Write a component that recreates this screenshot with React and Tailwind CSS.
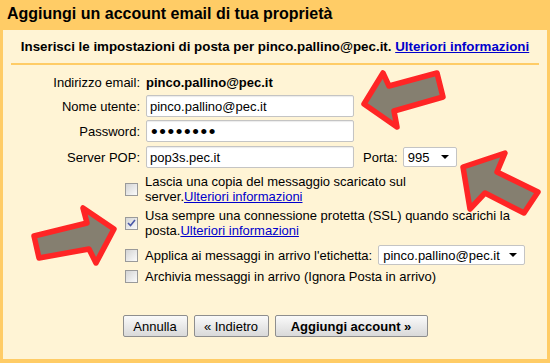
import React from 'react'

function Checkbox({ checked }) {
  return (
    <div className="w-[13px] h-[13px] border border-[#9a9a9a] bg-gradient-to-br from-[#d4d4d4] to-[#fbfbfb] flex items-center justify-center shrink-0">
      {checked && (
        <svg width="9" height="8" viewBox="0 0 9 8">
          <path d="M1 4 L3.5 6.5 L8 1" fill="none" stroke="#4a58a8" strokeWidth="1.6" />
        </svg>
      )}
    </div>
  )
}

function Field({ children, width = 'w-[208px]' }) {
  return (
    <div className={`${width} h-[22px] bg-white border border-[#c4c4c4] rounded-[2px] shadow-[inset_0_1px_1px_rgba(0,0,0,0.08)] flex items-center px-[3px]`}>
      {children}
    </div>
  )
}

function Select({ value, className }) {
  return (
    <div className={`${className} bg-white border border-[#c4c4c4] rounded-[2px] flex items-center pl-[4px] pr-[7px]`}>
      <span className="flex-1">{value}</span>
      <svg width="8" height="4" viewBox="0 0 8 4">
        <path d="M0 0 L8 0 L4 4 Z" fill="#000" />
      </svg>
    </div>
  )
}

function Button({ children, className }) {
  return (
    <button className={`${className} h-[22px] border border-[#8e8e8e] rounded-[2px] bg-gradient-to-b from-[#fafafa] to-[#d9d9d9] text-[13px] leading-[15px] text-black`}>
      {children}
    </button>
  )
}

function Arrows() {
  const stroke = { fill: '#857f70', stroke: '#ff2525', strokeWidth: 5.5, strokeLinejoin: 'round' }
  return (
    <svg className="absolute inset-0 pointer-events-none" width="550" height="363" viewBox="0 0 550 363">
      <polygon points="364,104 383,73 389,86 437,73 443,97 394,111 397,127" {...stroke} />
      <polygon points="463,167 505,153 497,172 538,192 524,213 485,193 470,209" {...stroke} />
      <polygon points="114,229 83,208 87,223 34,236 39,258 89,249 96,263" {...stroke} />
    </svg>
  )
}

export default function App() {
  return (
    <div className="relative w-[550px] h-[363px] bg-[#ffcc66] font-['Liberation_Sans',Arial,sans-serif] text-black overflow-hidden">
      <div className="h-[30px] pt-[5px] pl-[7px] text-[16px] leading-[18px] font-bold">
        Aggiungi un account email di tua proprietà
      </div>
      <div className="mx-[3px] h-[329px] bg-[#fff4d5] pt-[9px]">
        <div className="text-center text-[13.33px] leading-[15px] font-bold">
          Inserisci le impostazioni di posta per pinco.pallino@pec.it.{' '}
          <a className="text-[#0000cc] underline">Ulteriori informazioni</a>
        </div>
        <div className="mx-[8px] mt-[9px] h-[2px] bg-[#ffcc66]" />

        <div className="text-[13px] leading-[15px]">
          <div className="flex mt-[10px]">
            <div className="w-[137px] text-right">Indirizzo email:</div>
            <div className="ml-[6px] font-bold">pinco.pallino@pec.it</div>
          </div>
          <div className="flex items-center mt-[5px]">
            <div className="w-[137px] text-right">Nome utente:</div>
            <div className="ml-[6px]">
              <Field>pinco.pallino@pec.it</Field>
            </div>
          </div>
          <div className="flex items-center mt-[3px]">
            <div className="w-[137px] text-right">Password:</div>
            <div className="ml-[6px]">
              <Field>
                <span className="text-[19px] leading-[15px] tracking-[1.6px] pl-[1px]">••••••••</span>
              </Field>
            </div>
          </div>
          <div className="flex items-center mt-[4px]">
            <div className="w-[137px] text-right">Server POP:</div>
            <div className="ml-[6px] flex items-center">
              <Field>pop3s.pec.it</Field>
              <span className="ml-[9px]">Porta:</span>
              <Select value="995" className="ml-[5px] w-[54px] h-[20px]" />
            </div>
          </div>

          <div className="flex items-center mt-[6px]">
            <div className="w-[137px] flex justify-end pr-[2px]">
              <Checkbox />
            </div>
            <div className="ml-[5px]">
              Lascia una copia del messaggio scaricato sul
              <br />
              server.<a className="text-[#0000cc] underline">Ulteriori informazioni</a>
            </div>
          </div>
          <div className="flex items-center mt-[4px]">
            <div className="w-[137px] flex justify-end pr-[2px]">
              <Checkbox checked />
            </div>
            <div className="ml-[5px]">
              Usa sempre una connessione protetta (SSL) quando scarichi la
              <br />
              posta.<a className="text-[#0000cc] underline">Ulteriori informazioni</a>
            </div>
          </div>
          <div className="flex items-center mt-[7px] h-[20px]">
            <div className="w-[137px] flex justify-end pr-[2px]">
              <Checkbox />
            </div>
            <div className="ml-[5px] flex items-center">
              <span>Applica ai messaggi in arrivo l'etichetta:</span>
              <Select value="pinco.pallino@pec.it" className="ml-[6px] w-[147px] h-[20px]" />
            </div>
          </div>
          <div className="flex items-center mt-[4px]">
            <div className="w-[137px] flex justify-end pr-[2px]">
              <Checkbox />
            </div>
            <div className="ml-[5px]">Archivia messaggi in arrivo (Ignora Posta in arrivo)</div>
          </div>

          <div className="flex justify-center gap-[6px] mt-[31px]">
            <Button className="w-[65px]">Annulla</Button>
            <Button className="w-[75px]">« Indietro</Button>
            <Button className="w-[153px] font-bold">Aggiungi account »</Button>
          </div>
        </div>
      </div>
      <Arrows />
    </div>
  )
}
